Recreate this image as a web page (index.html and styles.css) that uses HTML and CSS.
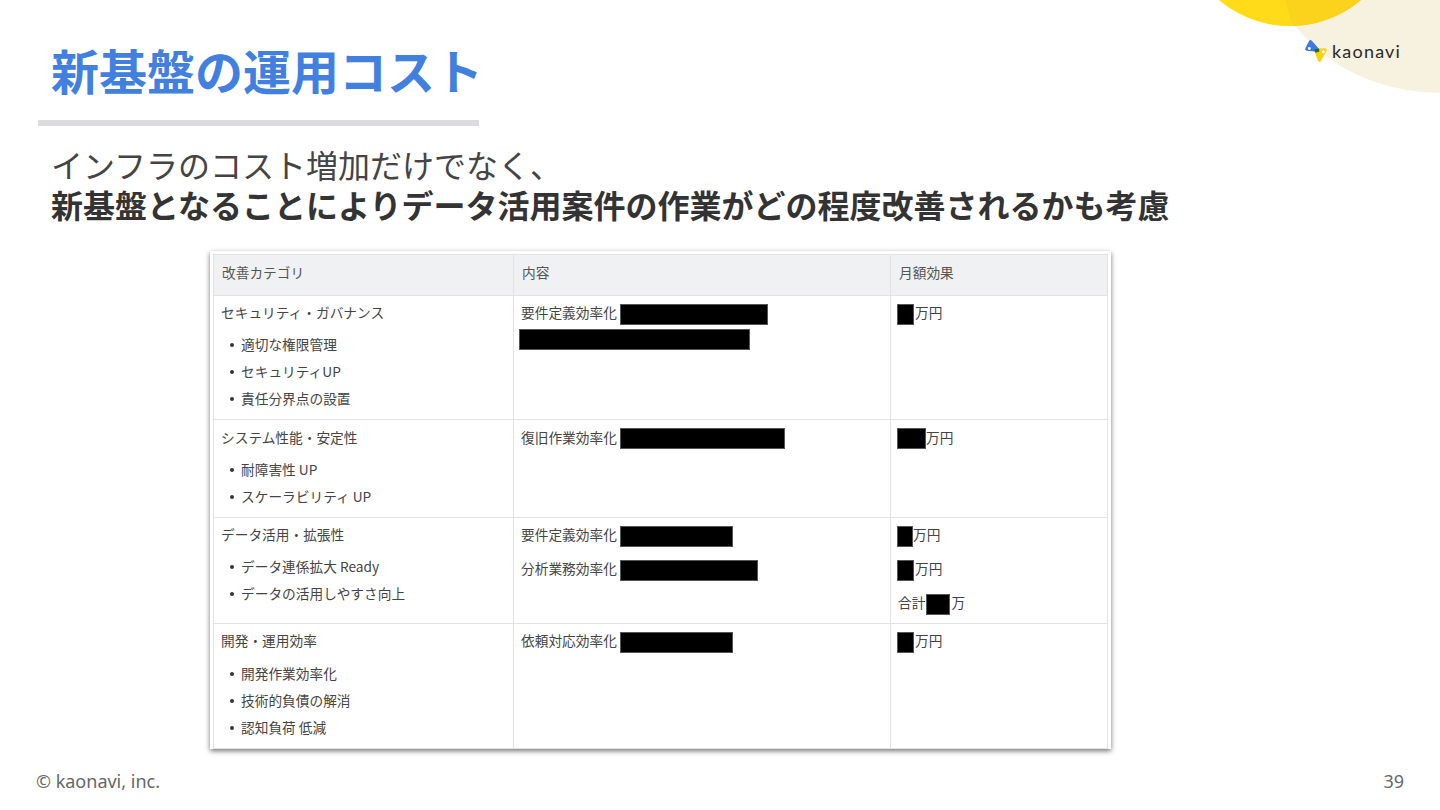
FILE: index.html
```html
<!DOCTYPE html>
<html lang="ja">
<head>
<meta charset="utf-8">
<title>新基盤の運用コスト</title>
<link rel="stylesheet" href="styles.css">
</head>
<body>
<div class="slide">
  <svg class="decor" width="300" height="100" viewBox="1140 0 300 100" aria-hidden="true">
    <ellipse cx="1440" cy="-60" rx="175" ry="153" fill="#f7f1df"/>
    <circle cx="1290" cy="-84" r="110" fill="#ffdb1a"/>
    <path d="M1282 -10 L1293 26 A110 110 0 0 0 1400 -84 L1282 -84 Z" fill="#fbd21c"/>
  </svg>
  <div class="logo">
    <svg width="24" height="24" viewBox="0 0 24 24" aria-hidden="true">
      <polygon points="11,11.500 20,11 14.500,21" fill="#fdd20e" stroke="#fdd20e" stroke-width="3.600" stroke-linejoin="round"/>
      <polygon points="5.500,3 2,10 12.500,11" fill="#3f78e0" stroke="#3f78e0" stroke-width="3.600" stroke-linejoin="round"/>
      <polygon points="9,10.500 13.800,9.500 14.300,12.500 10.700,13.800" fill="#1f6b35"/>
      <circle cx="4.300" cy="9.500" r="1.400" fill="#fff"/>
      <circle cx="18.300" cy="12.800" r="1.500" fill="#fff"/>
    </svg>
    <span class="logo-text">kaonavi</span>
  </div>

  <header class="head">
    <h1 class="title">新基盤の運用コスト</h1>
    <div class="rule"></div>
  </header>

  <p class="lead">インフラのコスト増加だけでなく、<br><strong>新基盤となることによりデータ活用案件の作業がどの程度改善されるかも考慮</strong></p>

  <div class="shot">
    <table class="grid">
      <colgroup>
        <col class="c1"><col class="c2"><col class="c3">
      </colgroup>
      <thead>
        <tr class="rh"><th>改善カテゴリ</th><th>内容</th><th>月額効果</th></tr>
      </thead>
      <tbody>
        <tr class="r1">
          <td>
            <p>セキュリティ・ガバナンス</p>
            <ul><li>適切な権限管理</li><li>セキュリティUP</li><li>責任分界点の設置</li></ul>
          </td>
          <td>
            <p>要件定義効率化<span class="red w148"></span></p>
            <p class="hang"><span class="red w231"></span></p>
          </td>
          <td><p class="amt"><span class="red w17"></span>万円</p></td>
        </tr>
        <tr class="r2">
          <td>
            <p>システム性能・安定性</p>
            <ul><li>耐障害性 UP</li><li>スケーラビリティ UP</li></ul>
          </td>
          <td><p>復旧作業効率化<span class="red w165"></span></p></td>
          <td><p class="amt"><span class="red w29"></span>万円</p></td>
        </tr>
        <tr class="r3">
          <td>
            <p>データ活用・拡張性</p>
            <ul><li>データ連係拡大 Ready</li><li>データの活用しやすさ向上</li></ul>
          </td>
          <td>
            <p>要件定義効率化<span class="red w113"></span></p>
            <p class="next">分析業務効率化<span class="red w138"></span></p>
          </td>
          <td>
            <p class="amt"><span class="red w16"></span>万円</p>
            <p class="amt next"><span class="red w17"></span>万円</p>
            <p class="amt next"><span class="sum">合計</span><span class="red w24"></span>万</p>
          </td>
        </tr>
        <tr class="r4">
          <td>
            <p>開発・運用効率</p>
            <ul><li>開発作業効率化</li><li>技術的負債の解消</li><li>認知負荷 低減</li></ul>
          </td>
          <td><p>依頼対応効率化<span class="red w113"></span></p></td>
          <td><p class="amt"><span class="red w17"></span>万円</p></td>
        </tr>
      </tbody>
    </table>
  </div>

  <footer class="foot">
    <span>© kaonavi, inc.</span>
    <span>39</span>
  </footer>
</div>
</body>
</html>
```
FILE: styles.css
```css
* { box-sizing: border-box; }
html, body { margin: 0; padding: 0; background: #fff; }
body { font-family: "Noto Sans CJK JP", "Noto Sans", sans-serif; color: #333; }

.slide {
  position: relative;
  width: 1440px;
  height: 810px;
  overflow: hidden;
  background: #fff;
  display: flex;
  flex-direction: column;
}

.decor { position: absolute; top: 0; right: 0; }

.logo {
  position: absolute;
  top: 39px;
  left: 1305px;
  display: flex;
  align-items: center;
  gap: 3px;
}
.logo-text {
  font-family: "Lato", sans-serif;
  font-size: 18px;
  line-height: 24px;
  letter-spacing: 1.2px;
  color: #2a2a2a;
}

.head { padding: 33px 0 0 38px; width: 479px; }
.title {
  margin: 0;
  padding-left: 13px;
  font-size: 48px;
  line-height: 72px;
  font-weight: 700;
  color: #4280e0;
  white-space: nowrap;
}
.rule { margin-top: 15px; height: 6px; background: #dbdce0; }

.lead {
  margin: 18px 0 0 51px;
  font-size: 32px;
  line-height: 40px;
  color: #444;
  font-weight: 400;
  white-space: nowrap;
}
.lead strong { font-weight: 700; color: #333; }

.shot {
  margin: 27px 0 0 210px;
  width: 901px;
  height: 498px;
  padding: 3px 3px 0;
  background: #fff;
  box-shadow: 0 2px 5px rgba(0, 0, 0, .55);
}

.grid {
  width: 894px;
  table-layout: fixed;
  border-collapse: collapse;
  font-size: 13.7px;
  line-height: 20px;
  color: #444;
}
.c1 { width: 300px; }
.c2 { width: 377px; }
.c3 { width: 217px; }

.grid th, .grid td {
  border: 1px solid #e2e3e5;
  vertical-align: top;
  text-align: left;
  font-weight: 400;
  padding: 6px 8px 0 7px;
}
.grid th { background: #f0f1f3; padding: 7px 8px 0 8px; color: #555; }
.rh { height: 41px; }
.r1 { height: 124px; }
.r2 { height: 98px; }
.r3 { height: 106px; }
.r4 { height: 125px; }
.grid .r2 td { padding-top: 7px; }
.r2 .red { vertical-align: -6px; }

.grid p { margin: 0; white-space: nowrap; height: 20px; }
.grid .next { margin-top: 14px; }
.grid .hang { margin: 5px 0 0 -5px; }
.grid .amt { margin-left: -3px; }
.sum { margin-left: 3px; }

.grid ul { margin: 9px 0 0; padding: 0 0 0 20px; list-style: none; }
.grid .r4 ul { margin-top: 10px; }
.grid li { position: relative; height: 27px; line-height: 27px; white-space: nowrap; }
.grid li::before {
  content: "";
  position: absolute;
  left: -11px;
  top: 12px;
  width: 4px;
  height: 4px;
  border-radius: 50%;
  background: #333;
}

.red {
  display: inline-block;
  height: 21px;
  vertical-align: -7px;
  background: #000;
  border: 1px solid #555;
  margin: 0 0 0 3px;
}
.w148 { width: 148px; }
.w231 { width: 231px; }
.w165 { width: 165px; }
.w113 { width: 113px; }
.w138 { width: 138px; }
.w16 { width: 16px; }
.w17 { width: 17px; margin-right: 1px; }
.w24 { width: 24px; margin: 0 1px; }
.w29 { width: 29px; }
.amt > .red:first-child { margin-left: 2px; }

.foot {
  margin-top: auto;
  padding: 0 36px 17px;
  display: flex;
  justify-content: space-between;
  font-family: "Noto Sans", sans-serif;
  font-size: 18px;
  line-height: 24px;
  color: #666;
}
```
